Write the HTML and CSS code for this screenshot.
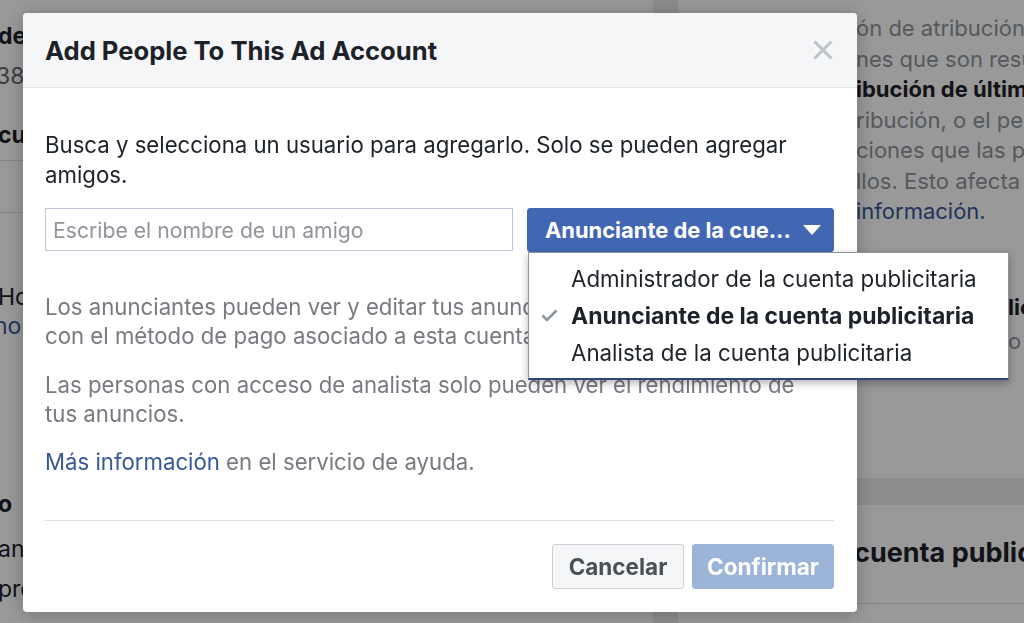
FILE: index.html
```html
<!DOCTYPE html>
<html lang="es">
<head>
<meta charset="utf-8">
<title>Add People To This Ad Account</title>
<link rel="stylesheet" href="styles.css">
</head>
<body>
<div class="page">
  <div class="col-left">
    <div class="bg-line bold l-de">de</div>
    <div class="bg-line grey l-387">387</div>
    <div class="bg-line bold l-cu">cu</div>
    <div class="bg-rule r1"></div>
    <div class="bg-rule r2"></div>
    <div class="bg-line l-ho">Ho</div>
    <div class="bg-line link l-no">no</div>
    <div class="bg-line bold l-o">o</div>
    <div class="bg-line l-an">an</div>
    <div class="bg-line l-pro">pro</div>
  </div>
  <div class="col-right">
    <div class="panel panel-a">
      <div class="rt-lines">
        <div class="rt">ón de atribución</div>
        <div class="rt">nes que son resultado</div>
        <div class="rt bold">ibución de último</div>
        <div class="rt">ribución, o el periodo</div>
        <div class="rt">ciones que las personas</div>
        <div class="rt">llos. Esto afecta</div>
        <div class="rt link">información.</div>
      </div>
      <div class="rt-peek bold p1">lic</div>
      <div class="rt-peek p2">o</div>
    </div>
    <div class="panel panel-b">
      <div class="pb-title">cuenta publicitaria</div>
      <div class="pb-rule"></div>
    </div>
  </div>
</div>

<div class="overlay">
  <div class="modal">
    <div class="modal-header">
      <h1 class="modal-title">Add People To This Ad Account</h1>
      <button class="close-btn" aria-label="Cerrar">
        <svg width="20" height="20" viewBox="0 0 20 20"><path d="M2.5 2.5 L17.5 17.5 M17.5 2.5 L2.5 17.5" stroke="#bec2c9" stroke-width="3" stroke-linecap="square" fill="none"/></svg>
      </button>
    </div>
    <div class="modal-body">
      <p class="intro">Busca y selecciona un usuario para agregarlo. Solo se pueden agregar<br>amigos.</p>
      <div class="picker-row">
        <input class="friend-input" type="text" placeholder="Escribe el nombre de un amigo">
        <div class="role-select">
          <button class="role-btn"><span>Anunciante de la cue...</span>
            <svg class="caret" width="18" height="10" viewBox="0 0 18 10"><path d="M0 0 H18 L9 10 Z" fill="#fff"/></svg>
          </button>
          <ul class="role-menu">
            <li class="role-item"><span class="check-slot"></span>Administrador de la cuenta publicitaria</li>
            <li class="role-item selected"><span class="check-slot"><svg width="17" height="13" viewBox="0 0 17 13"><path d="M1.5 6.5 L6 11 L15.5 1.5" stroke="#8d949e" stroke-width="2.6" fill="none"/></svg></span>Anunciante de la cuenta publicitaria</li>
            <li class="role-item"><span class="check-slot"></span>Analista de la cuenta publicitaria</li>
          </ul>
        </div>
      </div>
      <p class="note n1">Los anunciantes pueden ver y editar tus anuncios, y crear anuncios<br>con el método de pago asociado a esta cuenta publicitaria.</p>
      <p class="note n2">Las personas con acceso de analista solo pueden ver el rendimiento de<br>tus anuncios.</p>
      <p class="note n3"><a class="help-link" href="#">Más información</a> en el servicio de ayuda.</p>
    </div>
    <div class="modal-footer">
      <button class="btn btn-cancel">Cancelar</button>
      <button class="btn btn-confirm" disabled>Confirmar</button>
    </div>
  </div>
</div>
</body>
</html>
```

FILE: styles.css
```css
* { box-sizing: border-box; }

body {
  margin: 0;
  font-family: Inter, "Noto Sans", "Liberation Sans", sans-serif;
  color: #1d2129;
}

/* ---------- background page ---------- */
.page {
  display: flex;
  height: 623px;
  background: #e9ebee;
  overflow: hidden;
}

.col-left {
  width: 653px;
  flex: none;
  background: #fff;
  padding-top: 21px;
  overflow: hidden;
}

.bg-line {
  font-size: 23px;
  line-height: 30px;
  margin-left: -2px;
  white-space: nowrap;
  color: #1d2129;
}
.bold { font-weight: 700; }
.grey { color: #606770; }
.link { color: #365899; }

.l-387 { margin-top: 10px; margin-left: -4px; }
.l-cu { margin-top: 29px; }
.bg-rule { height: 1px; background: #dddfe2; }
.r1 { margin-top: 10px; }
.r2 { margin-top: 51px; }
.l-ho { margin-top: 70px; line-height: 29px; }
.l-no { line-height: 29px; margin-left: -6px; }
.l-o { margin-top: 148px; }
.l-an { margin-top: 15px; }
.l-pro { margin-top: 10px; }

.col-right {
  flex: 1;
  margin-left: 25px;
  display: flex;
  flex-direction: column;
  gap: 27px;
}

.panel { background: #fff; overflow: hidden; }
.panel-a { height: 478px; padding-top: 13px; }
.panel-b { flex: 1; padding-top: 30px; }

.rt-lines { padding-left: 178px; }
.rt {
  font-size: 22px;
  line-height: 30.5px;
  white-space: nowrap;
  color: #90949c;
}
.rt.bold { color: #1d2129; }
.rt.link { color: #365899; }

.rt-peek {
  padding-left: 330px;
  font-size: 22px;
  line-height: 30px;
  color: #90949c;
  white-space: nowrap;
}
.rt-peek.bold { color: #1d2129; }
.p1 { margin-top: 65px; }
.p2 { margin-top: 4px; }

.pb-title {
  padding-left: 176px;
  font-size: 27px;
  line-height: 36px;
  font-weight: 700;
  white-space: nowrap;
  color: #1d2129;
}
.pb-rule { margin-top: 32px; height: 1px; background: #dddfe2; }

/* ---------- dialog ---------- */
.overlay {
  position: fixed;
  inset: 0;
  background: rgba(0, 0, 0, 0.4);
}

.modal {
  margin: 13px 0 0 23px;
  width: 834px;
  background: #fff;
  border-radius: 4px;
  box-shadow: 0 2px 20px rgba(0, 0, 0, 0.25);
}

.modal-header {
  height: 75px;
  display: flex;
  align-items: center;
  justify-content: space-between;
  padding: 0 24px 0 22px;
  background: #f5f6f7;
  border-bottom: 1px solid #e5e5e5;
  border-radius: 4px 4px 0 0;
}

.modal-title {
  margin: 0;
  font-size: 25.6px;
  font-weight: 700;
  color: #1d2129;
  line-height: 30px;
  padding-top: 2px;
}

.close-btn {
  border: 0;
  background: none;
  padding: 0;
  width: 20px;
  height: 20px;
  display: flex;
}

.modal-body {
  padding: 42px 22px 0 22px;
}

.intro {
  margin: 0;
  font-size: 22.2px;
  line-height: 30px;
  color: #1d2129;
  white-space: nowrap;
}

.picker-row {
  margin-top: 18px;
  display: flex;
  align-items: flex-start;
  gap: 14px;
}

.friend-input {
  width: 468px;
  height: 43px;
  border: 1px solid #bdc7d8;
  padding: 0 7px;
  font-family: inherit;
  font-size: 21.2px;
  color: #1d2129;
  outline: none;
}
.friend-input::placeholder { color: #90949c; }

.role-select {
  position: relative;
  width: 307px;
}

.role-btn {
  width: 100%;
  height: 44px;
  display: flex;
  align-items: center;
  justify-content: space-between;
  padding: 0 12px 0 17px;
  background: #4267b2;
  border: 1px solid #4267b2;
  border-radius: 3px;
  color: #fff;
  font-family: inherit;
  font-size: 21.9px;
  font-weight: 700;
}

.role-menu {
  position: absolute;
  top: 44px;
  left: 1px;
  width: 481px;
  margin: 0;
  padding: 7px 0;
  list-style: none;
  background: #fff;
  border: 1px solid #8d949e;
  border-bottom: 2px solid #29487d;
  box-shadow: 0 3px 8px rgba(0, 0, 0, 0.3);
  z-index: 2;
}

.role-item {
  height: 37px;
  display: flex;
  align-items: center;
  font-size: 22.3px;
  color: #1d2129;
  white-space: nowrap;
}
.role-item.selected { font-weight: 700; font-size: 23px; }

.check-slot {
  width: 42px;
  flex: none;
  display: flex;
  padding-left: 12px;
}

.note {
  margin: 20px 0 0;
  font-size: 22.2px;
  line-height: 29px;
  color: #777a80;
  white-space: nowrap;
}
.note.n1 { margin-top: 40px; }
.note.n3 { margin-top: 19px; }

.help-link {
  color: #365899;
  text-decoration: none;
}

.modal-footer {
  margin: 44px 23px 0 22px;
  border-top: 1px solid #dddfe2;
  padding: 23px 0;
  display: flex;
  justify-content: flex-end;
  gap: 8px;
}

.btn {
  height: 45px;
  border-radius: 3px;
  font-family: inherit;
  font-size: 22.5px;
  font-weight: 700;
}

.btn-cancel {
  width: 132px;
  background: #f5f6f7;
  border: 1px solid #ced0d4;
  color: #4b4f56;
}

.btn-confirm {
  width: 142px;
  background: #9cb4d8;
  border: 1px solid #9cb4d8;
  color: #fff;
}
```
